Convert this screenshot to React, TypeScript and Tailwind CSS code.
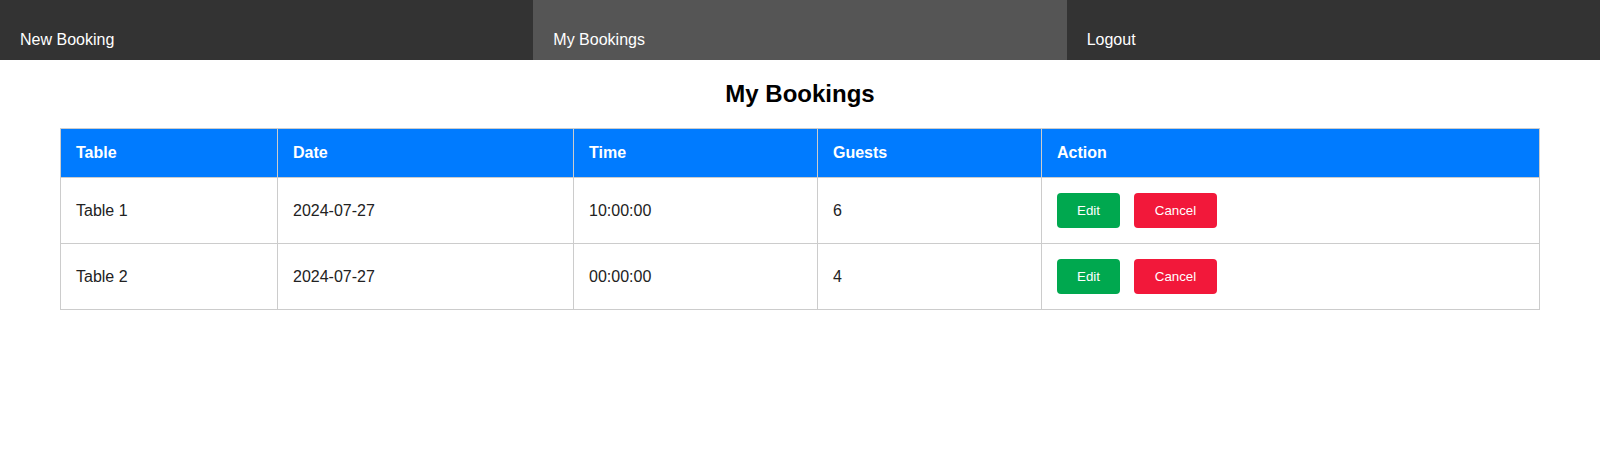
import React from "react";

const bookings = [
  { table: "Table 1", date: "2024-07-27", time: "10:00:00", guests: 6 },
  { table: "Table 2", date: "2024-07-27", time: "00:00:00", guests: 4 },
];

const navItems = [
  { label: "New Booking", active: false },
  { label: "My Bookings", active: true },
  { label: "Logout", active: false },
];

export default function App() {
  return (
    <div className="min-h-screen bg-white font-['Liberation_Sans',Arial,sans-serif] text-[16px] text-[#222]">
      <nav className="flex h-[60px] bg-[#333]">
        {navItems.map((item) => (
          <a
            key={item.label}
            href="#"
            className={`flex flex-1 items-end px-[20px] pb-[11px] text-white leading-[18px] ${
              item.active ? "bg-[#555]" : "bg-[#333]"
            }`}
          >
            {item.label}
          </a>
        ))}
      </nav>

      <h2 className="my-[20px] text-center text-[24px] font-bold leading-[28px] text-black">
        My Bookings
      </h2>

      <div className="px-[60px]">
        <table className="w-full border-collapse border border-[#ccc]">
          <thead>
            <tr className="bg-[#007bff] text-left text-white">
              <th className="w-[217px] border border-[#ccc] px-[15px] py-[15px] font-bold leading-[18px]">Table</th>
              <th className="w-[296px] border border-[#ccc] px-[15px] py-[15px] font-bold leading-[18px]">Date</th>
              <th className="w-[244px] border border-[#ccc] px-[15px] py-[15px] font-bold leading-[18px]">Time</th>
              <th className="w-[224px] border border-[#ccc] px-[15px] py-[15px] font-bold leading-[18px]">Guests</th>
              <th className="border border-[#ccc] px-[15px] py-[15px] font-bold leading-[18px]">Action</th>
            </tr>
          </thead>
          <tbody>
            {bookings.map((b) => (
              <tr key={b.table} className="h-[65px]">
                <td className="border border-[#ccc] px-[15px] py-[15px] leading-[18px]">{b.table}</td>
                <td className="border border-[#ccc] px-[15px] py-[15px] leading-[18px]">{b.date}</td>
                <td className="border border-[#ccc] px-[15px] py-[15px] leading-[18px]">{b.time}</td>
                <td className="border border-[#ccc] px-[15px] py-[15px] leading-[18px]">{b.guests}</td>
                <td className="border border-[#ccc] px-[15px] py-[15px]">
                  <div className="flex gap-[14px]">
                    <button className="h-[35px] w-[63px] rounded-[4px] bg-[#00a84f] text-[13.333px] text-white">
                      Edit
                    </button>
                    <button className="h-[35px] w-[83px] rounded-[4px] bg-[#f2183a] text-[13.333px] text-white">
                      Cancel
                    </button>
                  </div>
                </td>
              </tr>
            ))}
          </tbody>
        </table>
      </div>
    </div>
  );
}
